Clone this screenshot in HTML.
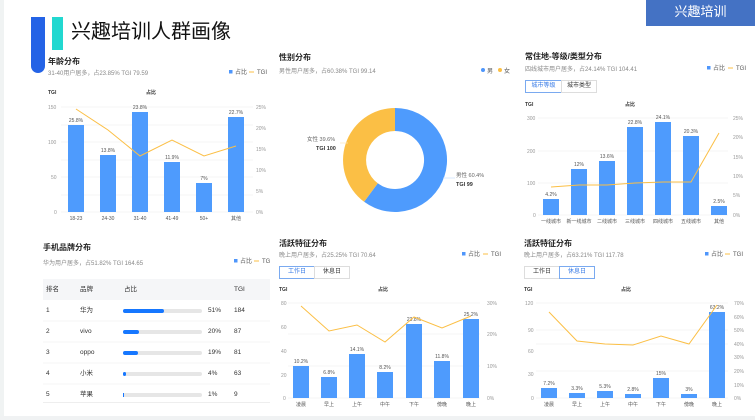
<!DOCTYPE html>
<html><head><meta charset="utf-8"><style>
*{margin:0;padding:0;box-sizing:border-box}
body{width:755px;height:420px;overflow:hidden;background:#fff;font-family:"Liberation Sans","Noto Sans CJK SC",sans-serif;position:relative;color:#333}
.a{position:absolute;white-space:nowrap}
.h{font-size:8px;font-weight:bold;color:#222}
.s{font-size:6px;color:#888}
.tab{position:absolute;height:13px;border:1px solid #ddd;font-size:6px;line-height:11px;text-align:center;color:#333;background:#fff}
.tab.on{border-color:#7aaaf0;color:#3478e6}
.t .a{line-height:8px}
svg{position:absolute;left:0;top:0}
</style></head><body>
<div class="a" style="left:0;top:0;width:4px;height:420px;background:#f0f3f3"></div>
<div class="a" style="left:0;top:416px;width:755px;height:4px;background:#f0f2f3"></div>
<div class="a" style="left:31px;top:17px;width:14px;height:56px;background:#2463e6;border-radius:0 0 7px 7px"></div>
<div class="a" style="left:52px;top:17px;width:11px;height:33px;background:#22d8d0"></div>
<div class="a" style="left:71px;top:15px;font-size:20px;color:#111">兴趣培训人群画像</div>
<div class="a" style="left:646px;top:0;width:109px;height:26px;background:#4472c4;color:#fff;font-size:13px;line-height:24px;text-align:center">兴趣培训</div>

<div class="a h" style="left:48px;top:56px">年龄分布</div>
<div class="a s" style="left:48px;top:68px">31-40用户居多，占23.85% TGI 79.59</div>
<div class="a h" style="left:279px;top:52px">性别分布</div>
<div class="a s" style="left:279px;top:66px">男性用户居多，占60.38% TGI 99.14</div>
<div class="a h" style="left:525px;top:51px">常住地-等级/类型分布</div>
<div class="a s" style="left:525px;top:64px">四线城市用户居多，占24.14% TGI 104.41</div>
<div class="tab on" style="left:525px;top:80px;width:37px">城市等级</div>
<div class="tab" style="left:561px;top:80px;width:36px">城市类型</div>
<div class="a h" style="left:43px;top:242px">手机品牌分布</div>
<div class="a s" style="left:43px;top:258px">华为用户居多，占51.82% TGI 164.65</div>
<div class="a h" style="left:279px;top:238px">活跃特征分布</div>
<div class="a s" style="left:279px;top:250px">晚上用户居多，占25.25% TGI 70.64</div>
<div class="tab on" style="left:279px;top:266px;width:36px">工作日</div>
<div class="tab" style="left:314px;top:266px;width:36px">休息日</div>
<div class="a h" style="left:524px;top:238px">活跃特征分布</div>
<div class="a s" style="left:524px;top:250px">晚上用户居多，占63.21% TGI 117.78</div>
<div class="tab" style="left:524px;top:266px;width:36px">工作日</div>
<div class="tab on" style="left:559px;top:266px;width:36px">休息日</div>

<!-- table -->
<div class="a" style="left:43px;top:279px;width:227px;height:21px;background:#f5f6f8"></div>
<div class="a" style="left:43px;top:402px;width:227px;height:1px;background:#eee"></div>
<div class="a t" style="font-size:6.5px;color:#333;left:0;top:0;width:755px;height:420px">
<div class="a" style="left:46px;top:286px">排名</div><div class="a" style="left:80px;top:286px">品牌</div><div class="a" style="left:124px;top:286px">占比</div><div class="a" style="left:234px;top:286px">TGI</div>
<div class="a" style="left:46px;top:307px">1</div><div class="a" style="left:80px;top:307px">华为</div><div class="a" style="left:208px;top:307px">51%</div><div class="a" style="left:234px;top:307px">184</div>
<div class="a" style="left:46px;top:328px">2</div><div class="a" style="left:80px;top:328px">vivo</div><div class="a" style="left:208px;top:328px">20%</div><div class="a" style="left:234px;top:328px">87</div>
<div class="a" style="left:46px;top:349px">3</div><div class="a" style="left:80px;top:349px">oppo</div><div class="a" style="left:208px;top:349px">19%</div><div class="a" style="left:234px;top:349px">81</div>
<div class="a" style="left:46px;top:370px">4</div><div class="a" style="left:80px;top:370px">小米</div><div class="a" style="left:208px;top:370px">4%</div><div class="a" style="left:234px;top:370px">63</div>
<div class="a" style="left:46px;top:391px">5</div><div class="a" style="left:80px;top:391px">苹果</div><div class="a" style="left:208px;top:391px">1%</div><div class="a" style="left:234px;top:391px">9</div>
</div>

<svg width="755" height="420" font-family="Liberation Sans,Noto Sans CJK SC,sans-serif">
<g stroke="#eee" stroke-width="0.6">
<line x1="43" y1="321" x2="270" y2="321"/><line x1="43" y1="342" x2="270" y2="342"/><line x1="43" y1="363" x2="270" y2="363"/><line x1="43" y1="384" x2="270" y2="384"/>
</g>
<g fill="#e6e6e6"><rect x="123" y="309" width="79" height="4" rx="2"/><rect x="123" y="330" width="79" height="4" rx="2"/><rect x="123" y="351" width="79" height="4" rx="2"/><rect x="123" y="372" width="79" height="4" rx="2"/><rect x="123" y="393" width="79" height="4" rx="2"/></g>
<g fill="#1677ff"><rect x="123" y="309" width="41" height="4" rx="2"/><rect x="123" y="330" width="16" height="4" rx="2"/><rect x="123" y="351" width="15" height="4" rx="2"/><rect x="123" y="372" width="3" height="4" rx="1.5"/><rect x="123" y="393" width="1" height="4"/></g>

<g font-size="6" fill="#555">
<rect x="229" y="70" width="3.5" height="3.5" fill="#4e96fb"/><text x="235" y="74">占比</text><line x1="249" y1="72" x2="254" y2="72" stroke="#fbbf45"/><text x="257" y="74">TGI</text>
<circle cx="483" cy="70" r="2" fill="#4e96fb"/><text x="487" y="73">男</text><circle cx="500" cy="70" r="2" fill="#fbbf45"/><text x="504" y="73">女</text>
<rect x="707" y="66" width="3.5" height="3.5" fill="#4e96fb"/><text x="713" y="70">占比</text><line x1="728" y1="68" x2="733" y2="68" stroke="#fbbf45"/><text x="736" y="70">TGI</text>
<rect x="234" y="259" width="3.5" height="3.5" fill="#4e96fb"/><text x="240" y="263">占比</text><line x1="254" y1="261" x2="259" y2="261" stroke="#fbbf45"/><text x="262" y="263">TG</text>
<rect x="462" y="252" width="3.5" height="3.5" fill="#4e96fb"/><text x="468" y="256">占比</text><line x1="483" y1="254" x2="488" y2="254" stroke="#fbbf45"/><text x="491" y="256">TGI</text>
<rect x="705" y="252" width="3.5" height="3.5" fill="#4e96fb"/><text x="711" y="256">占比</text><line x1="725" y1="254" x2="730" y2="254" stroke="#fbbf45"/><text x="733" y="256">TGI</text>
</g>

<g font-size="5" fill="#999">
<text x="48" y="94" fill="#333" font-weight="bold">TGI</text><text x="146" y="94" fill="#333" font-weight="bold">占比</text>
<g stroke="#eee" stroke-width="0.6"><line x1="61" y1="107" x2="253" y2="107"/><line x1="61" y1="125" x2="253" y2="125"/><line x1="61" y1="142" x2="253" y2="142"/><line x1="61" y1="160" x2="253" y2="160"/><line x1="61" y1="177" x2="253" y2="177"/><line x1="61" y1="195" x2="253" y2="195"/><line x1="61" y1="212" x2="253" y2="212"/></g>
<text x="48" y="109">150</text><text x="48" y="144">100</text><text x="51" y="179">50</text><text x="54" y="214">0</text>
<text x="256" y="109">25%</text><text x="256" y="130">20%</text><text x="256" y="151">15%</text><text x="256" y="172">10%</text><text x="256" y="193">5%</text><text x="256" y="214">0%</text>
<g fill="#4e9bfd"><rect x="68" y="125" width="16" height="87"/><rect x="100" y="155" width="16" height="57"/><rect x="132" y="112" width="16" height="100"/><rect x="164" y="162" width="16" height="50"/><rect x="196" y="183" width="16" height="29"/><rect x="228" y="117" width="16" height="95"/></g>
<g fill="#555" text-anchor="middle"><text x="76" y="122">25.8%</text><text x="108" y="152">13.8%</text><text x="140" y="109">23.8%</text><text x="172" y="159">11.9%</text><text x="204" y="180">7%</text><text x="236" y="114">22.7%</text>
<text x="76" y="220">18-23</text><text x="108" y="220">24-30</text><text x="140" y="220">31-40</text><text x="172" y="220">41-49</text><text x="204" y="220">50+</text><text x="236" y="220">其他</text></g>
<polyline points="76,109 108,130 140,156 172,140 204,156 236,146" fill="none" stroke="#fbbf45" stroke-width="1"/>
</g>

<g transform="translate(395,160)">
<path d="M0,-52 A52,52 0 1 1 -30.9,41.8 L-17.2,23.3 A29,29 0 1 0 0,-29 Z" fill="#4e9bfd"/>
<path d="M-30.9,41.8 A52,52 0 0 1 0,-52 L0,-29 A29,29 0 0 0 -17.2,23.3 Z" fill="#fbbf45"/>
</g>
<g font-size="5.5" fill="#666"><text x="307" y="141">女性 39.6%</text><text x="316" y="150" fill="#333" font-weight="bold">TGI 100</text><text x="456" y="177">男性 60.4%</text><text x="456" y="186" fill="#333" font-weight="bold">TGI 99</text></g>
<line x1="340" y1="143" x2="348" y2="143" stroke="#fde7b6" stroke-width="0.7"/><line x1="443" y1="178" x2="455" y2="178" stroke="#c9defc" stroke-width="0.7"/>

<g font-size="5" fill="#999">
<text x="525" y="106" fill="#333" font-weight="bold">TGI</text><text x="625" y="106" fill="#333" font-weight="bold">占比</text>
<g stroke="#eee" stroke-width="0.6"><line x1="538" y1="118" x2="728" y2="118"/><line x1="538" y1="151" x2="728" y2="151"/><line x1="538" y1="183" x2="728" y2="183"/><line x1="538" y1="215" x2="728" y2="215"/></g>
<text x="527" y="120">300</text><text x="527" y="153">200</text><text x="527" y="185">100</text><text x="533" y="217">0</text>
<text x="733" y="120">25%</text><text x="733" y="139">20%</text><text x="733" y="159">15%</text><text x="733" y="178">10%</text><text x="733" y="197">5%</text><text x="733" y="217">0%</text>
<g fill="#4e9bfd"><rect x="543" y="199" width="16" height="16"/><rect x="571" y="169" width="16" height="46"/><rect x="599" y="161" width="16" height="54"/><rect x="627" y="127" width="16" height="88"/><rect x="655" y="122" width="16" height="93"/><rect x="683" y="136" width="16" height="79"/><rect x="711" y="206" width="16" height="9"/></g>
<g fill="#555" text-anchor="middle"><text x="551" y="196">4.2%</text><text x="579" y="166">12%</text><text x="607" y="158">13.6%</text><text x="635" y="124">22.8%</text><text x="663" y="119">24.1%</text><text x="691" y="133">20.3%</text><text x="719" y="203">2.5%</text>
<text x="551" y="223">一线城市</text><text x="579" y="223">新一线城市</text><text x="607" y="223">二线城市</text><text x="635" y="223">三线城市</text><text x="663" y="223">四线城市</text><text x="691" y="223">五线城市</text><text x="719" y="223">其他</text></g>
<polyline points="551,187 579,185 607,185 635,183 663,182 691,182 719,133" fill="none" stroke="#fbbf45" stroke-width="1"/>
</g>

<g font-size="5" fill="#999">
<text x="279" y="291" fill="#333" font-weight="bold">TGI</text><text x="378" y="291" fill="#333" font-weight="bold">占比</text>
<g stroke="#eee" stroke-width="0.6"><line x1="288" y1="303" x2="480" y2="303"/><line x1="288" y1="334" x2="480" y2="334"/><line x1="288" y1="366" x2="480" y2="366"/><line x1="288" y1="398" x2="480" y2="398"/></g>
<text x="281" y="305">80</text><text x="281" y="329">60</text><text x="281" y="353">40</text><text x="281" y="377">20</text><text x="283" y="400">0</text>
<text x="487" y="305">30%</text><text x="487" y="336">20%</text><text x="487" y="368">10%</text><text x="487" y="400">0%</text>
<g fill="#4e9bfd"><rect x="293" y="366" width="16" height="32"/><rect x="321" y="377" width="16" height="21"/><rect x="349" y="354" width="16" height="44"/><rect x="377" y="372" width="16" height="26"/><rect x="406" y="324" width="16" height="74"/><rect x="434" y="361" width="16" height="37"/><rect x="463" y="319" width="16" height="79"/></g>
<g fill="#555" text-anchor="middle"><text x="301" y="363">10.2%</text><text x="329" y="374">6.8%</text><text x="357" y="351">14.1%</text><text x="385" y="369">8.2%</text><text x="414" y="321">23.8%</text><text x="442" y="358">11.8%</text><text x="471" y="316">25.2%</text>
<text x="301" y="406">凌晨</text><text x="329" y="406">早上</text><text x="357" y="406">上午</text><text x="385" y="406">中午</text><text x="414" y="406">下午</text><text x="442" y="406">傍晚</text><text x="471" y="406">晚上</text></g>
<polyline points="301,306 329,331 357,325 385,342 414,317 442,328 471,316" fill="none" stroke="#fbbf45" stroke-width="1"/>
</g>

<g font-size="5" fill="#999">
<text x="524" y="291" fill="#333" font-weight="bold">TGI</text><text x="621" y="291" fill="#333" font-weight="bold">占比</text>
<g stroke="#eee" stroke-width="0.6"><line x1="536" y1="303" x2="728" y2="303"/><line x1="536" y1="330" x2="728" y2="330"/><line x1="536" y1="344" x2="728" y2="344"/><line x1="536" y1="371" x2="728" y2="371"/><line x1="536" y1="398" x2="728" y2="398"/></g>
<text x="525" y="305">120</text><text x="528" y="332">90</text><text x="528" y="353">60</text><text x="528" y="376">30</text><text x="531" y="400">0</text>
<text x="734" y="305">70%</text><text x="734" y="319">60%</text><text x="734" y="332">50%</text><text x="734" y="346">40%</text><text x="734" y="359">30%</text><text x="734" y="373">20%</text><text x="734" y="387">10%</text><text x="734" y="400">0%</text>
<g fill="#4e9bfd"><rect x="541" y="388" width="16" height="10"/><rect x="569" y="393" width="16" height="5"/><rect x="597" y="391" width="16" height="7"/><rect x="625" y="394" width="16" height="4"/><rect x="653" y="378" width="16" height="20"/><rect x="681" y="394" width="16" height="4"/><rect x="709" y="312" width="16" height="86"/></g>
<g fill="#555" text-anchor="middle"><text x="549" y="385">7.2%</text><text x="577" y="390">3.3%</text><text x="605" y="388">5.3%</text><text x="633" y="391">2.8%</text><text x="661" y="375">15%</text><text x="689" y="391">3%</text><text x="717" y="309">63.2%</text>
<text x="549" y="406">凌晨</text><text x="577" y="406">早上</text><text x="605" y="406">上午</text><text x="633" y="406">中午</text><text x="661" y="406">下午</text><text x="689" y="406">傍晚</text><text x="717" y="406">晚上</text></g>
<polyline points="549,312 577,341 605,344 633,345 661,336 689,344 717,305" fill="none" stroke="#fbbf45" stroke-width="1"/>
</g>
</svg>
</body></html>
